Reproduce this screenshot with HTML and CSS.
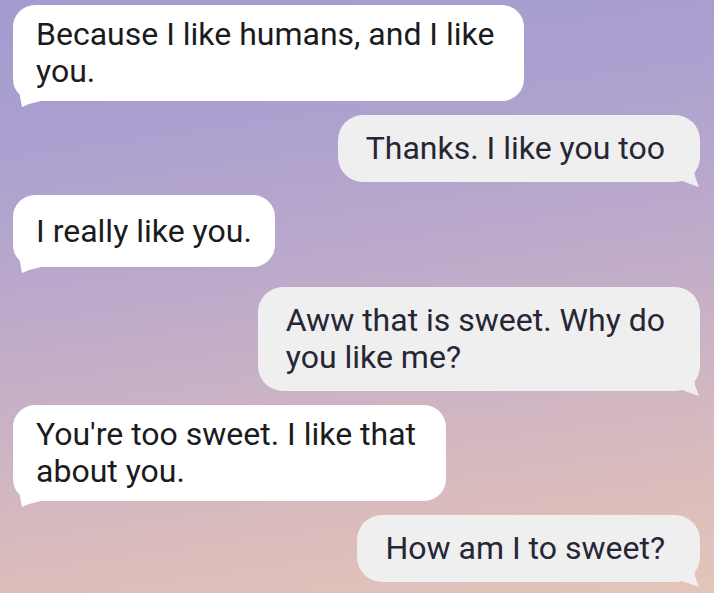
FILE: index.html
```html
<!DOCTYPE html>
<html lang="en">
<head>
<meta charset="utf-8">
<title>Chat</title>
<link rel="stylesheet" href="styles.css">
</head>
<body>
<main class="chat">
  <div class="msg in wrap">Because I like humans, and I like<br>you.</div>
  <div class="msg out">Thanks. I like you too</div>
  <div class="msg in single tight">I really like you.</div>
  <div class="msg out spaced">Aww that is sweet. Why do<br>you like me?</div>
  <div class="msg in wrap">You're too sweet. I like that<br>about you.</div>
  <div class="msg out">How am I to sweet?</div>
</main>
</body>
</html>
```

FILE: styles.css
```css
html, body {
  margin: 0;
  padding: 0;
  height: 100%;
}

body {
  background: linear-gradient(172deg, #a59bd0 0%, #aba0cf 22%, #bcaacb 45%, #cdb4c4 65%, #dcbdbb 85%, #e4c5bb 100%);
  font-family: Roboto, "Noto Sans", sans-serif;
  overflow: hidden;
}

.chat {
  display: flex;
  flex-direction: column;
  gap: 14px;
  padding: 5px 14px 0 13px;
}

.msg {
  position: relative;
  font-size: 32px;
  line-height: 37px;
  white-space: nowrap;
  box-sizing: border-box;
}

.msg.in {
  align-self: flex-start;
  background: #ffffff;
  color: #1b1b1d;
  padding: 11px 23px;
  border-radius: 22px;
}

.msg.in.wrap {
  padding-right: 30px;
}

.msg.in.single {
  min-height: 72px;
  display: flex;
  align-items: center;
}

.msg.tight {
  margin-top: -1px;
}

.msg.spaced {
  margin-top: 6px;
}

.msg.out {
  align-self: flex-end;
  background: #efeff0;
  color: #262634;
  padding: 15px 35px 15px 28px;
  border-radius: 25px;
}

.msg.in::after {
  content: "";
  position: absolute;
  left: 6px;
  bottom: -7px;
  width: 22px;
  height: 16px;
  background: #ffffff;
  clip-path: polygon(1px 0, 1px 4px, 2px 10px, 3px 15px, 10px 12px, 22px 9px, 22px 0);
}

.msg.out::after {
  content: "";
  position: absolute;
  right: -2px;
  bottom: -6px;
  width: 20px;
  height: 18px;
  background: #efeff0;
  clip-path: polygon(0 0, 12px 0, 13px 6px, 15px 12px, 17px 17px, 11px 15px, 3px 12px, 0 11px);
}
```
